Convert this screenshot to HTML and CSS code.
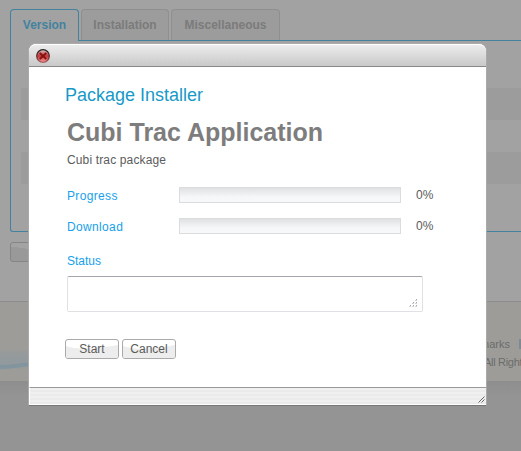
FILE: index.html
```html
<!DOCTYPE html>
<html lang="en">
<head>
<meta charset="utf-8">
<title>Package Installer</title>
<link rel="stylesheet" href="styles.css">
</head>
<body>
<div class="page">
  <nav class="tabs">
    <a class="tab active">Version</a>
    <a class="tab installation">Installation</a>
    <a class="tab misc">Miscellaneous</a>
  </nav>
  <div class="panel">
    <div class="stripe"></div>
    <div class="stripe"></div>
  </div>
  <div class="page-button"></div>
  <footer class="footer">
    <svg class="wave" width="60" height="32" viewBox="0 0 60 32">
      <defs>
        <linearGradient id="haze" x2="0" y2="1"><stop offset="0" stop-color="#969a9b" stop-opacity="0"/><stop offset=".2" stop-color="#969a9b"/><stop offset=".7" stop-color="#919a9e"/><stop offset="1" stop-color="#969a9b" stop-opacity="0"/></linearGradient>
      </defs>
      <rect width="60" height="22" fill="url(#haze)"/>
      <path d="M0 16C10 16 20 14 30 13V17C20 18 10 20 0 20Z" fill="#82959f"/>
    </svg>
    <div class="footer-text">
      <div class="links">marks <span class="divider"></span></div>
      <div class="rights">All Right</div>
    </div>
  </footer>
</div>
<section class="dialog">
  <header class="titlebar">
    <svg width="14" height="14" viewBox="0 0 14 14">
      <defs>
        <linearGradient id="ring" x2="0" y2="1"><stop offset="0" stop-color="#222"/><stop offset=".55" stop-color="#5c2929"/><stop offset="1" stop-color="#b06060"/></linearGradient>
        <linearGradient id="ball" x2="0" y2="1"><stop offset="0" stop-color="#e5caca"/><stop offset=".3" stop-color="#c46a6a"/><stop offset=".5" stop-color="#c03a3a"/><stop offset="1" stop-color="#f49a9a"/></linearGradient>
      </defs>
      <circle cx="7" cy="7" r="6.3" fill="url(#ball)" stroke="url(#ring)" stroke-width="1.2"/>
      <path d="M3.7 4L10.3 10M10.3 4L3.7 10" stroke="#8a1010" stroke-width="1.8"/>
    </svg>
  </header>
  <div class="content">
    <h2>Package Installer</h2>
    <h1>Cubi Trac Application</h1>
    <p>Cubi trac package</p>
    <div class="row"><label>Progress</label><div class="bar"></div><span>0%</span></div>
    <div class="row"><label>Download</label><div class="bar"></div><span>0%</span></div>
    <label class="status">Status</label>
    <div class="textarea">
      <svg width="8" height="8" viewBox="0 0 8 8" fill="#aaa"><path d="M7 0h1v1h-1zM4 3h1v1h-1zM7 3h1v1h-1zM1 6h1v1h-1zM4 6h1v1h-1zM7 6h1v1h-1z"/><path d="M6 1h1v1h-1zM3 4h1v1h-1zM6 4h1v1h-1zM0 7h1v1h-1zM3 7h1v1h-1zM6 7h1v1h-1zM7 1h1v1h-1zM4 4h1v1h-1zM7 4h1v1h-1zM1 7h1v1h-1zM4 7h1v1h-1zM7 7h1v1h-1z" opacity=".5"/></svg>
    </div>
    <div class="actions">
      <div class="button"><svg width="52" height="18" viewBox="0 0 52 18"><path d="M0 6C12 10 30 9 52 5V18H0Z" fill="#ededed"/></svg><span>Start</span></div>
      <div class="button"><svg width="52" height="18" viewBox="0 0 52 18"><path d="M0 6C12 10 30 9 52 5V18H0Z" fill="#ededed"/></svg><span>Cancel</span></div>
    </div>
  </div>
  <div class="statusbar">
    <svg width="7" height="7" viewBox="0 0 7 7"><path d="M.5 6.5L6.5 .5M3.5 6.5L6.5 3.5" stroke="#666" stroke-width="1"/></svg>
  </div>
</section>
</body>
</html>
```
FILE: styles.css
```css
* { box-sizing: border-box; }
body {
  margin: 0;
  height: 451px;
  overflow: hidden;
  position: relative;
  background: linear-gradient(#8e8e8e 381px, #949494 396px);
  font: 12px/16px "Liberation Sans", Arial, sans-serif;
  color: #5b5b5b;
}
h1, h2, p { margin: 0; }
.page {
  height: 381px;
  padding-top: 9px;
  background: #a2a2a2;
  display: flex;
  flex-direction: column;
}
.tabs {
  display: flex;
  gap: 2px;
  height: 32px;
  padding-left: 10px;
  border-bottom: 1px solid transparent;
}
.tab {
  height: 31px;
  border: 1px solid #8f8f8f;
  border-bottom: 0;
  border-radius: 4px 4px 0 0;
  background: #9c9c9c;
  color: #7b7b7b;
  font-weight: bold;
  line-height: 30px;
  text-align: center;
}
.tab.active {
  width: 69px;
  height: 32px;
  background: #a2a2a2;
  border-color: #43829f;
  color: #43829f;
  position: relative;
}
.installation { width: 88px; }
.misc { width: 109px; }
.panel {
  margin: -1px 0 0 10px;
  height: 192px;
  padding: 47px 0 0 10px;
  border: solid #43829f;
  border-width: 1px 0 1px 1px;
  border-bottom-left-radius: 3px;
  display: flex;
  flex-direction: column;
  gap: 32px;
}
.stripe { height: 32px; flex: none; background: #9c9c9c; }
.page-button {
  margin: 10px 0 0 10px;
  width: 60px;
  height: 20px;
  border: 1px solid #858585;
  border-radius: 3px;
  background: linear-gradient(8deg, #999 55%, #a3a3a3 56%);
}
.footer {
  margin-top: 39px;
  height: 80px;
  border-top: 1px solid #8c8c8c;
  background: #9d9c98;
  display: flex;
  justify-content: space-between;
}
.wave { margin-top: 47px; }
.footer-text {
  width: 43px;
  padding-top: 33px;
  line-height: 18px;
  font-size: 11px;
  color: #6c6c6c;
  white-space: nowrap;
}
.links { padding-left: 2px; }
.divider {
  display: inline-block;
  width: 2px;
  height: 10px;
  margin-left: 6px;
  vertical-align: -1px;
  background: #808990;
}
.rights { padding-left: 6px; letter-spacing: -0.3px; }
.dialog {
  position: absolute;
  left: 28px;
  top: 43px;
  width: 459px;
  height: 363px;
  border: 1px solid #aaa;
  border-bottom-color: #777;
  border-radius: 8px 8px 0 0;
  background: #fff;
  display: flex;
  flex-direction: column;
}
.titlebar {
  height: 23px;
  padding: 5px 7px;
  border-top: 1px solid #fff;
  border-bottom: 1px solid #888;
  border-radius: 7px 7px 0 0;
  background: linear-gradient(#ececec, #c9c9c9);
  display: flex;
}
.titlebar svg { margin-top: -1px; }
.content { flex: 1; padding: 17px 0 0 36px; }
h2 { font-size: 18px; line-height: 22px; font-weight: normal; color: #1899c8; }
h1 { margin: 11px 0 0 2px; font-size: 25px; line-height: 30px; color: #7d7d7d; }
p { margin: 5px 0 0 2px; letter-spacing: 0.14px; }
.row { display: flex; height: 16px; margin: 19px 0 0 2px; }
.row + .row { margin-top: 15px; }
label { width: 112px; color: #16a1ea; line-height: 18px; }
.row label { letter-spacing: 0.35px; }
.bar {
  width: 222px;
  height: 16px;
  border: 1px solid #dadcdd;
  background: linear-gradient(#dfe1e3, #f5f7f9 65%, #f7f8fa);
}
.row span { margin-left: 15px; }
.status { display: block; margin: 18px 0 0 2px; line-height: 18px; }
.textarea {
  width: 356px;
  height: 36px;
  margin: 6px 0 0 2px;
  border: 1px solid #dfe1e5;
  border-top-color: #a5a6ad;
  border-radius: 2px;
  display: flex;
  justify-content: flex-end;
  align-items: flex-end;
  padding: 0 5px 4px;
}
.actions { display: flex; gap: 3px; margin-top: 27px; }
.button {
  width: 54px;
  height: 20px;
  display: grid;
  border: 1px solid #aaa;
  border-radius: 3px;
  overflow: hidden;
  line-height: 18px;
  text-align: center;
}
.button > * { grid-area: 1 / 1; }
.button span { z-index: 1; }
.statusbar {
  height: 18px;
  border-top: 1px solid #999;
  border-left: 1px solid #fff;
  border-bottom: 1px solid #fff;
  background: repeating-linear-gradient(#f0f0f0 0 2px, #ebebeb 2px 4px);
  display: flex;
  justify-content: flex-end;
  align-items: flex-end;
  padding: 0 1px 1px 0;
}
```
